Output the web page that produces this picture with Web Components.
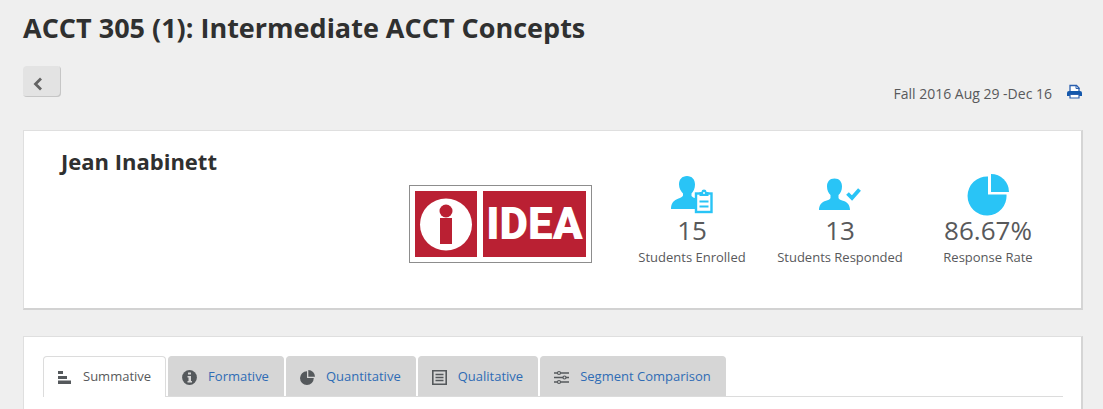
<!DOCTYPE html>
<html lang="en">
<head>
<meta charset="utf-8">
<title>ACCT 305 (1): Intermediate ACCT Concepts</title>
<style>
html, body { height: 100%; }
body { margin: 0; background: #efefef; color: #58595b; font: 14px/20px "Open Sans", sans-serif; }
</style>
</head>
<body>
<report-page>
  <page-head slot="head" term="Fall 2016 Aug 29 -Dec 16">ACCT 305 (1): Intermediate ACCT Concepts</page-head>
  <course-summary>
    <span slot="name">Jean Inabinett</span>
    <idea-logo slot="logo"></idea-logo>
    <stat-item icon="enrolled" value="15">Students Enrolled</stat-item>
    <stat-item icon="responded" value="13">Students Responded</stat-item>
    <stat-item icon="rate" value="86.67%">Response Rate</stat-item>
  </course-summary>
  <report-panel>
    <report-tab icon="bars" active>Summative</report-tab>
    <report-tab icon="info">Formative</report-tab>
    <report-tab icon="pie">Quantitative</report-tab>
    <report-tab icon="list">Qualitative</report-tab>
    <report-tab icon="sliders">Segment Comparison</report-tab>
  </report-panel>
</report-page>
<script>
const ICONS = {
  enrolled: `<svg width="42" height="42" viewBox="0 0 42 42"><g fill="#29c4f6"><path d="M16 2c5 0 8 3.500 8 8.500 0 4-1.500 7-3.500 9v2.500c1.500 1.500 3 2 4.500 2.500V35H0c0-6 3-9 7.500-10.500 2-.7 4-1.500 4.500-3v-2C10 17.500 8 14.500 8 10.500 8 5.500 11 2 16 2z"/></g><rect x="25" y="19.500" width="15.500" height="18.500" fill="#fff" stroke="#29c4f6" stroke-width="2.400"/><path d="M28.500 18h2c0-3.300 5-3.300 5 0h2v4h-9z" fill="#29c4f6"/><circle cx="33" cy="19" r="1" fill="#fff"/><path d="M28.500 27.500h9M28.500 32.500h9" stroke="#29c4f6" stroke-width="2"/></svg>`,
  responded: `<svg width="42" height="42" viewBox="0 0 42 42"><path d="M15.500 4.500c5 0 7.500 3.500 7.500 8 0 4-1.500 6.500-3.500 8.500v3c.5 1.500 2.500 2 4.500 2.700C28.500 28 31 31 31 36H0C0 31 2.500 28 7 26.700c2-.7 4-1.200 4.500-2.700v-3C9.500 19 8 16.500 8 12.500c0-4.500 2.500-8 7.500-8z" fill="#29c4f6"/><path d="M28.500 19.500l4.500 4.500 7.500-8.500" fill="none" stroke="#29c4f6" stroke-width="3.800"/></svg>`,
  rate: `<svg width="42" height="42" viewBox="0 0 42 42"><path d="M21 2.500v18H39.500a19.500 19.500 0 1 1-18.500-18z" fill="#29c4f6"/><path d="M24 0A18 18 0 0 1 42 18H24z" fill="#29c4f6"/></svg>`,
  bars: `<svg width="15" height="15" viewBox="0 0 15 15" fill="#55595c"><path d="M1 1h5v3H1zM1 6h9v3H1zM1 10.500h13v3.500H1z"/></svg>`,
  info: `<svg width="15" height="15" viewBox="0 0 15 15"><circle cx="7.500" cy="7.500" r="7.400" fill="#55595c"/><path d="M6 2.500h3v2H6zM5.500 6H9v5h1v1.500H5.500V11h1V7.500h-1z" fill="#d6d6d6"/></svg>`,
  pie: `<svg width="15" height="15" viewBox="0 0 15 15" fill="#55595c"><path d="M7 1.200V8h6.800A6.900 6.900 0 1 1 7 1.200z"/><path d="M8.300 0A6.700 6.700 0 0 1 15 6.700H8.300z"/></svg>`,
  list: `<svg width="15" height="15" viewBox="0 0 15 15" fill="none" stroke="#55595c" stroke-width="1.600"><path d="M.8.8h13.400v13.400H.8zM3.500 4.500h8M3.500 7.500h8M3.500 10.500h8"/></svg>`,
  sliders: `<svg width="15" height="15" viewBox="0 0 15 15" fill="#d6d6d6" stroke="#55595c" stroke-width="1.500"><path d="M0 3h15M0 7.500h15M0 12h15"/><circle cx="5" cy="3" r="1.500" stroke-width="1.200"/><circle cx="10.500" cy="7.500" r="1.500" stroke-width="1.200"/><circle cx="5" cy="12" r="1.500" stroke-width="1.200"/></svg>`
};

class Base extends HTMLElement {
  connectedCallback() {
    if (this.shadowRoot) return;
    this.attachShadow({ mode: "open" }).innerHTML = this.view();
  }
}

customElements.define("report-page", class extends Base {
  view() { return `
    <style>
      :host { display: flex; flex-direction: column; min-height: 100%; box-sizing: border-box; padding: 0 20px 0 23px; }
      main { display: flex; flex-direction: column; flex: 1; gap: 26px; }
    </style>
    <slot name="head"></slot><main><slot></slot></main>`; }
});

customElements.define("page-head", class extends Base {
  view() { return `
    <style>
      :host { display: block; }
      h1 { margin: 0; padding-top: 8px; font-size: 27px; line-height: 40px; font-weight: 700; color: #2f3030; }
      .bar { display: flex; justify-content: space-between; align-items: flex-start; padding-top: 18px; height: 64px; }
      .back { width: 38px; height: 31px; padding: 4px 8px 0 0; border: 0; border-radius: 4px; background: #e3e3e3; box-shadow: inset -1px -1px 0 #c6c6c6; display: flex; align-items: center; justify-content: center; }
      .term { display: flex; gap: 15px; padding: 18px 1px 0 0; }
      a { display: block; height: 15px; }
      svg { display: block; }
    </style>
    <h1><slot></slot></h1>
    <div class="bar">
      <button class="back" type="button" aria-label="Back"><svg width="10" height="14" viewBox="0 0 10 14"><path d="M8 1.500L2.500 7 8 12.500" fill="none" stroke="#636363" stroke-width="2.800"/></svg></button>
      <div class="term"><span>${this.getAttribute("term")}</span>
        <a href="#print" aria-label="Print"><svg width="15" height="15" viewBox="0 0 15 15"><path d="M3 8V1.500h6.500L12 4v4" fill="#fff" stroke="#2a5fae" stroke-width="1.300"/><path d="M9 1v3.500h3.500" fill="none" stroke="#2a5fae"/><path d="M0 9q0-2 2-2h11q2 0 2 2v3H0z" fill="#1458ac"/><path d="M3 10.500h9v3.500H3z" fill="#fff" stroke="#2a5fae" stroke-width="1.200"/></svg></a>
      </div>
    </div>`; }
});

customElements.define("course-summary", class extends Base {
  view() { return `
    <style>
      :host { display: grid; grid-template-columns: 1fr auto 444px; column-gap: 26px; align-items: start; min-height: 180px; box-sizing: border-box; padding: 15px 19px 28px 37px; background: #fff; border: 1px solid #dfdfdf; border-right: 2px solid #d5d5d5; border-bottom: 2px solid #d2d2d2; }
      h2 { margin: 0; font-size: 22px; line-height: 30px; font-weight: 700; color: #2f3030; }
      .logo { padding-top: 39px; }
      .stats { display: grid; grid-template-columns: repeat(3, 1fr); padding-top: 28px; }
    </style>
    <h2><slot name="name"></slot></h2>
    <div class="logo"><slot name="logo"></slot></div>
    <div class="stats"><slot></slot></div>`; }
});

customElements.define("idea-logo", class extends Base {
  view() { return `
    <style>
      :host { display: flex; gap: 6px; padding: 5px; border: 1px solid #8d8d8d; background: #fff; }
      .mark { width: 62px; height: 66px; background: #ba2033; }
      .word { width: 103px; height: 66px; background: #ba2033; color: #fff; font: 900 44px/66px Roboto, sans-serif; text-align: center; }
      svg { display: block; }
    </style>
    <div class="mark"><svg width="62" height="66" viewBox="0 0 62 66"><circle cx="31" cy="33.500" r="26" fill="#fff"/><circle cx="31" cy="20" r="6.500" fill="#ba2033"/><path d="M25 27h12v26H25z" fill="#ba2033"/></svg></div>
    <div class="word">IDEA</div>`; }
});

customElements.define("stat-item", class extends Base {
  view() { return `
    <style>
      :host { display: flex; flex-direction: column; align-items: center; text-align: center; }
      svg { display: block; }
      .value { font-size: 26px; line-height: 28px; }
      .label { font-size: 13px; line-height: 20px; padding-top: 3px; white-space: nowrap; }
    </style>
    ${ICONS[this.getAttribute("icon")]}
    <div class="value">${this.getAttribute("value")}</div>
    <div class="label"><slot></slot></div>`; }
});

customElements.define("report-panel", class extends Base {
  view() { return `
    <style>
      :host { display: block; flex: 1; padding: 19px 18px 0 19px; background: #fff; border: 1px solid #dfdfdf; border-right: 2px solid #d5d5d5; border-bottom: 0; }
      nav { display: flex; gap: 2px; border-bottom: 1px solid #dcdcdc; }
    </style>
    <nav><slot></slot></nav>`; }
});

customElements.define("report-tab", class extends Base {
  view() { return `
    <style>
      :host { display: block; }
      a { display: flex; align-items: center; gap: 11px; height: 37px; padding: 0 14px 2px 13px; border: 1px solid #d6d6d6; border-bottom: 0; border-radius: 4px 4px 0 0; background: #d6d6d6; color: #2f6cb5; font-size: 13px; line-height: 20px; text-decoration: none; white-space: nowrap; }
      svg { display: block; margin-top: 4px; }
      :host([active]) { margin-bottom: -1px; }
      :host([active]) a { padding-bottom: 3px; background: #fff; border-color: #dcdcdc; color: #58595b; }
    </style>
    <a href="#${this.getAttribute("icon")}">${ICONS[this.getAttribute("icon")]}<span><slot></slot></span></a>`; }
});
</script>
</body>
</html>
